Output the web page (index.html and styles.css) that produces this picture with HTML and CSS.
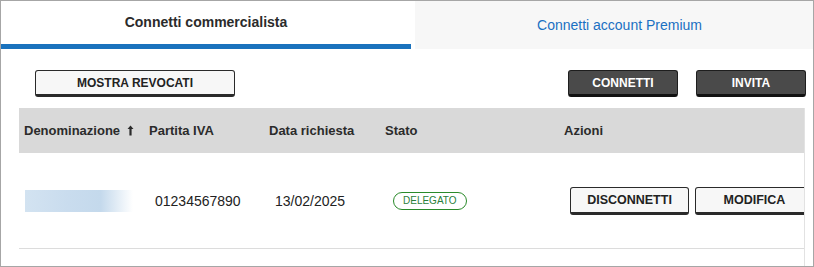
FILE: index.html
```html
<!DOCTYPE html>
<html lang="it">
<head>
<meta charset="utf-8">
<title>Connetti commercialista</title>
<link rel="stylesheet" href="styles.css">
</head>
<body>
<div class="frame">
  <div class="tabs">
    <div class="tab tab-active">Connetti commercialista</div>
    <div class="tab tab-inactive">Connetti account Premium</div>
  </div>
  <div class="toolbar">
    <button class="btn btn-light btn-wide">MOSTRA REVOCATI</button>
    <div class="toolbar-right">
      <button class="btn btn-dark">CONNETTI</button>
      <button class="btn btn-dark">INVITA</button>
    </div>
  </div>
  <div class="table">
    <div class="row head">
      <div class="cell c1">Denominazione <svg class="arrow" width="7" height="11" viewBox="0 0 7 11"><path d="M3.5 0.5 L6.5 4 L4.6 4 L4.6 10.5 L2.4 10.5 L2.4 4 L0.5 4 Z" fill="#2b2b2b"/></svg></div>
      <div class="cell c2">Partita IVA</div>
      <div class="cell c3">Data richiesta</div>
      <div class="cell c4">Stato</div>
      <div class="cell c5">Azioni</div>
    </div>
    <div class="row body">
      <div class="cell c1"><div class="blurname"></div></div>
      <div class="cell c2">01234567890</div>
      <div class="cell c3">13/02/2025</div>
      <div class="cell c4"><span class="badge">DELEGATO</span></div>
      <div class="cell c5 actions">
        <button class="btn btn-light btn-act">DISCONNETTI</button>
        <button class="btn btn-light btn-act">MODIFICA</button>
      </div>
    </div>
    <div class="row body short"></div>
  </div>
</div>
</body>
</html>
```

FILE: styles.css
```css
* { box-sizing: border-box; }
html, body { margin: 0; padding: 0; background: #fff; }
body { font-family: "Liberation Sans", Arial, sans-serif; color: #222; }

.frame {
  width: 814px;
  height: 267px;
  border: 1px solid #a6a6a6;
  overflow: hidden;
}

.tabs { display: flex; height: 48px; gap: 4px; }
.tab { display: flex; align-items: center; justify-content: center; }
.tab-active {
  width: 410px;
  font-weight: bold;
  font-size: 14px;
  color: #2b2b2b;
  border-bottom: 5px solid #1a72bd;
  padding-bottom: 1px;
}
.tab-inactive {
  flex: 1;
  background: #f7f7f7;
  color: #1a70c2;
  font-size: 14px;
  padding: 0 0 1px 11px;
}

.toolbar {
  display: flex;
  justify-content: space-between;
  padding: 21px 7px 0 34px;
}
.toolbar-right { display: flex; gap: 18px; }

.btn {
  font-family: "Liberation Sans", Arial, sans-serif;
  font-weight: bold;
  font-size: 12px;
  height: 27px;
  border: 1px solid #2a2a2a;
  border-bottom-width: 3px;
  border-radius: 3px;
  padding: 0;
  margin: 0;
  cursor: pointer;
}
.btn-light { background: #f7f7f7; color: #222; }
.btn-dark { background: #4a4a4a; color: #fff; border-color: #1e1e1e; border-bottom-color: #111; width: 110px; }
.btn-wide { width: 200px; }

.table {
  margin: 11px 0 0 18px;
  width: 786px;
  overflow: hidden;
  border-right: 1px solid #e2e2e2;
}
.row {
  display: grid;
  grid-template-columns: 125px 120px 116px 179px 1fr;
  align-items: center;
}
.head {
  height: 45px;
  background: #d9d9d9;
  font-weight: bold;
  font-size: 13px;
  color: #2b2b2b;
  padding-bottom: 1px;
}
.head .cell { padding-left: 5px; }
.arrow { margin-left: 3px; vertical-align: -1px; }

.body {
  height: 96px;
  border-bottom: 1px solid #dcdcdc;
  font-size: 14px;
  color: #222;
}
.body .cell { padding-left: 11px; }
.body .c1 { padding-left: 6px; }
.body.short { height: 40px; border-bottom: none; }

.cell { white-space: nowrap; }

.blurname {
  width: 108px;
  height: 22px;
  background: linear-gradient(to right, #d3e3f1 0%, #c9dcee 40%, #c4d9ec 70%, #ffffff 100%);
}

.badge {
  display: inline-block;
  margin-left: 2px;
  height: 18px;
  line-height: 16px;
  padding: 0 9px;
  border: 1px solid #2a8a2a;
  border-radius: 9px;
  font-size: 10px;
  color: #2a7f3a;
  background: #fff;
}

.actions { display: flex; gap: 6px; }
.btn-act { width: 119px; height: 28px; font-size: 12.5px; flex-shrink: 0; }
```
